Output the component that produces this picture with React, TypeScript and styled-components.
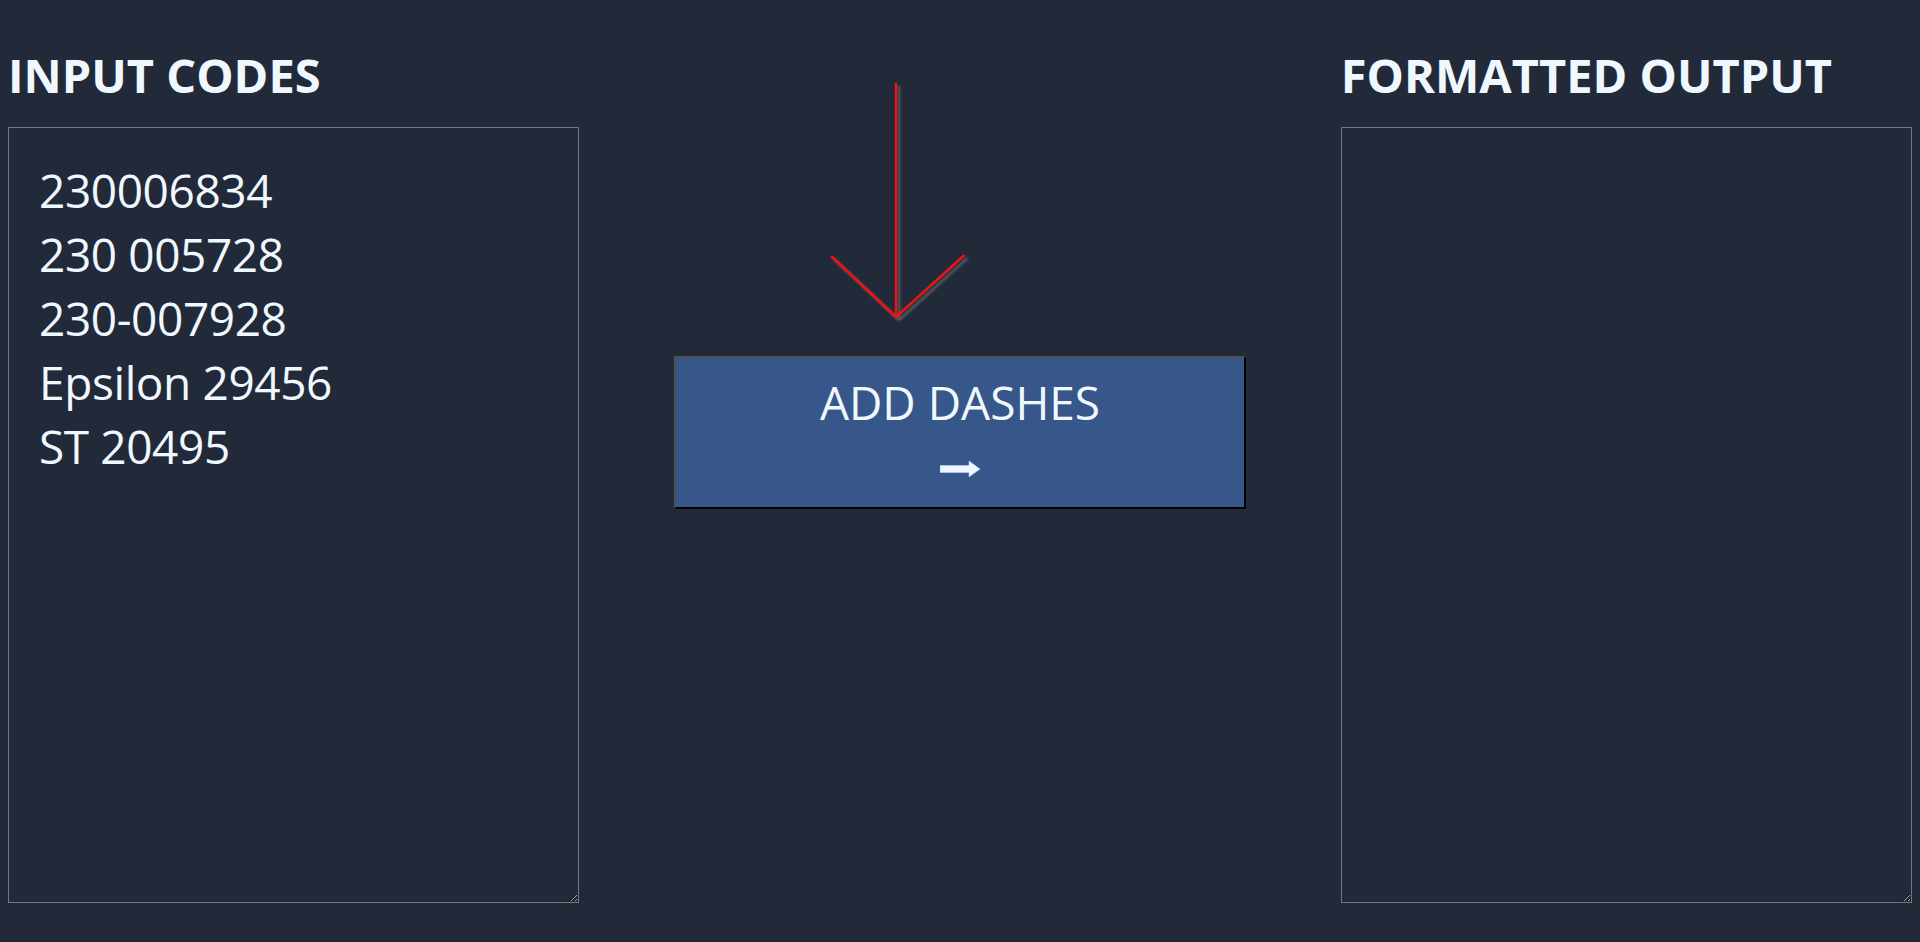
import React from "react";
import styled, { createGlobalStyle } from "styled-components";

const GlobalStyle = createGlobalStyle`
  html, body {
    background: #222a39;
  }
  body {
    margin: 8px;
    font-family: "Open Sans", "Noto Sans", sans-serif;
    color: aliceblue;
  }
`;

const Page = styled.main`
  display: flex;
  justify-content: space-between;
  align-items: flex-start;
  width: 100%;
`;

const Column = styled.section`
  width: 30%;
  display: flex;
  flex-direction: column;
`;

const CenterColumn = styled.section`
  width: 30%;
  display: flex;
  flex-direction: column;
  padding-top: 68px;
`;

const Heading = styled.h2`
  margin: 35px 0 20px;
  font-family: "Open Sans", "Noto Sans", sans-serif;
  font-weight: 700;
  font-size: 47px;
  line-height: 64px;
  color: aliceblue;
  white-space: nowrap;
`;

const CodeArea = styled.textarea`
  box-sizing: border-box;
  width: 100%;
  height: 776px;
  margin: 0;
  padding: 30px;
  border: 1px solid #767676;
  background: transparent;
  color: aliceblue;
  font-family: "Open Sans", "Noto Sans", sans-serif;
  font-size: 46px;
  letter-spacing: -0.4px;
  line-height: 64px;
  outline: none;
  color-scheme: dark;
`;

const Pointer = styled.svg`
  display: block;
  width: 100%;
  height: 280px;
  overflow: visible;
  filter: drop-shadow(3px 3px 1px rgba(110, 110, 110, 0.75));
`;

const ActionButton = styled.button`
  box-sizing: border-box;
  width: 100%;
  height: 153px;
  margin: 0;
  padding: 12px 0 0;
  display: flex;
  flex-direction: column;
  align-items: center;
  justify-content: flex-start;
  background: #375689;
  border-style: solid;
  border-width: 2px;
  border-color: #4f4f4f #000 #000 #4f4f4f;
  color: aliceblue;
  font-family: "Open Sans", "Noto Sans", sans-serif;
  cursor: pointer;
`;

const ButtonLabel = styled.span`
  display: block;
  font-size: 46px;
  line-height: 64px;
  white-space: nowrap;
`;

const ButtonArrow = styled.svg`
  display: block;
  width: 40px;
  height: 16px;
  margin-top: 27px;
`;

const inputCodes = [
  "230006834",
  "230 005728",
  "230-007928",
  "Epsilon 29456",
  "ST 20495",
].join("\n");

export default function App() {
  return (
    <>
      <GlobalStyle />
      <Page>
        <Column>
          <Heading>INPUT CODES</Heading>
          <CodeArea defaultValue={inputCodes} spellCheck={false} />
        </Column>
        <CenterColumn>
          <Pointer viewBox="0 0 571 280" preserveAspectRatio="xMinYMin meet">
            <g stroke="#f21212" strokeWidth="2.4" fill="none" strokeLinecap="butt">
              <line x1="222" y1="7" x2="222" y2="241" />
              <line x1="157" y1="180" x2="222" y2="241" />
              <line x1="290.5" y1="179" x2="222" y2="241" />
            </g>
          </Pointer>
          <ActionButton type="button">
            <ButtonLabel>ADD DASHES</ButtonLabel>
            <ButtonArrow viewBox="0 0 40 16">
              <path
                d="M0 4.5 H29 V0 L40 8 L29 16 V11.5 H0 Z"
                fill="#eef6ff"
                stroke="#b9d4f5"
                strokeWidth="0.6"
              />
            </ButtonArrow>
          </ActionButton>
        </CenterColumn>
        <Column>
          <Heading>FORMATTED OUTPUT</Heading>
          <CodeArea readOnly spellCheck={false} />
        </Column>
      </Page>
    </>
  );
}
